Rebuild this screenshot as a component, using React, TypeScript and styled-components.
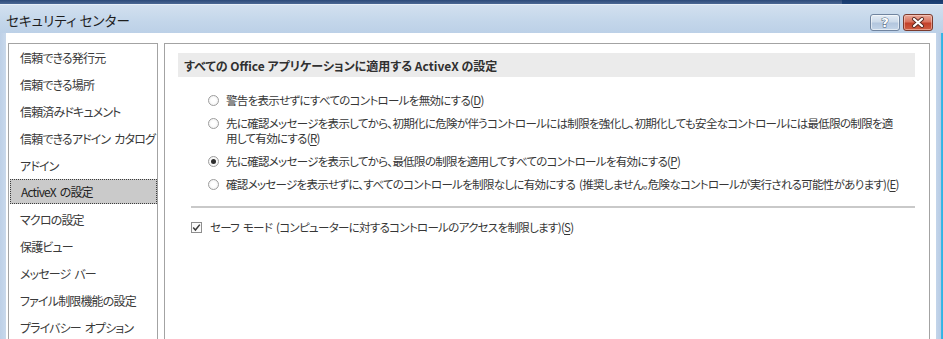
import React from "react";
import styled, { createGlobalStyle, css } from "styled-components";

const FONT = `"Noto Sans CJK JP", "Noto Sans", "Liberation Sans", sans-serif`;

const GlobalStyle = createGlobalStyle`
  html, body { margin: 0; padding: 0; background: #ffffff; overflow: hidden; }
  body { font-family: ${FONT}; }
`;

const Window = styled.div`
  width: 943px;
  height: 339px;
  display: flex;
  flex-direction: column;
  overflow: hidden;
  font-family: ${FONT};
  font-feature-settings: "palt";
  color: #363636;
`;

const TopStrip = styled.div`
  height: 4px;
  display: flex;
  flex-shrink: 0;
`;

const StripPart = styled.div<{ $dark?: boolean }>`
  height: 100%;
  ${(p) =>
    p.$dark
      ? css`
          width: 101px;
          background: linear-gradient(#17396c, #1f4479);
        `
      : css`
          flex: 1;
          background: linear-gradient(#2c4a78, #4b6894);
        `}
`;

const TitleBar = styled.div`
  height: 28px;
  flex-shrink: 0;
  display: flex;
  align-items: flex-start;
  border-top: 1px solid #e6eef7;
  background: linear-gradient(#d2e0ef, #c3d6ea 60%, #bcd0e7);
  padding: 0 10px 0 6px;
`;

const Title = styled.div`
  flex: 1;
  font-size: 13.5px;
  line-height: 16px;
  margin-top: 7px;
  color: #1e1e1e;
  letter-spacing: 0.1px;
`;

const CaptionButtons = styled.div`
  display: flex;
  gap: 3px;
  margin-top: 9px;
`;

const CaptionButton = styled.div<{ $close?: boolean }>`
  width: 30px;
  height: 17px;
  box-sizing: border-box;
  border-radius: 3px;
  display: flex;
  align-items: center;
  justify-content: center;
  ${(p) =>
    p.$close
      ? css`
          border: 1px solid #7b3b2e;
          background: linear-gradient(#e9a999, #d9735f 45%, #c3402a 55%, #cf5e43);
          box-shadow: inset 0 0 0 1px rgba(255, 220, 210, 0.5);
        `
      : css`
          border: 1px solid #70849f;
          background: linear-gradient(#e4ecf5, #ccdaea 45%, #b3c6de 55%, #c3d4e8);
          box-shadow: inset 0 0 0 1px rgba(255, 255, 255, 0.55);
        `}
`;

const HelpGlyph = styled.span`
  font-family: "DejaVu Sans", sans-serif;
  font-weight: bold;
  font-size: 13px;
  line-height: 13px;
  color: #ffffff;
  -webkit-text-stroke: 1px #4a5c78;
  paint-order: stroke fill;
`;

const Body = styled.div`
  flex: 1;
  display: flex;
  min-height: 0;
`;

const SideFrame = styled.div<{ $right?: boolean }>`
  flex-shrink: 0;
  ${(p) =>
    p.$right
      ? css`
          width: 7px;
          background: linear-gradient(90deg, #c4d5ea, #b7cbe4 70%, #3bb8e6 72%, #2fb2e3);
        `
      : css`
          width: 6px;
          background: linear-gradient(90deg, #bdd0e7, #c9d9ec);
        `}
`;

const Content = styled.div`
  flex: 1;
  display: flex;
  gap: 6px;
  padding: 10px 6px 0 2px;
  background: #ffffff;
  min-width: 0;
`;

const NavList = styled.ul`
  width: 150px;
  flex-shrink: 0;
  box-sizing: border-box;
  margin: 0;
  padding: 0;
  list-style: none;
  border: 1px solid #a3a3a3;
  border-bottom: none;
  background: #fff;
`;

const NavItem = styled.li<{ $selected?: boolean }>`
  height: 27px;
  box-sizing: border-box;
  display: flex;
  align-items: center;
  font-size: 12px;
  letter-spacing: -0.85px;
  word-spacing: 2px;
  color: #3a3a3a;
  white-space: nowrap;
  padding-left: 11px;
  ${(p) =>
    p.$selected &&
    css`
      margin: 0 0 2px 1px;
      height: 25px;
      padding-left: 10px;
      background: #cacaca;
      border: 1px dotted #3c3c3c;
      color: #222;
    `}
`;

const Panel = styled.section`
  flex: 1;
  box-sizing: border-box;
  border: 1px solid #a3a3a3;
  border-bottom: none;
  padding: 9px 14px 0 13px;
  min-width: 0;
`;

const SectionHeader = styled.div`
  height: 24px;
  display: flex;
  align-items: center;
  padding-left: 6px;
  background: #ebebeb;
  font-size: 12px;
  font-weight: bold;
  color: #303030;
  white-space: nowrap;
`;

const OptionList = styled.div`
  display: flex;
  flex-direction: column;
  gap: 8px;
  margin-top: 16px;
  padding-left: 30px;
`;

const OptionRow = styled.div`
  display: flex;
  align-items: flex-start;
  gap: 7px;
`;

const Radio = styled.span<{ $checked?: boolean }>`
  width: 11px;
  height: 11px;
  flex-shrink: 0;
  box-sizing: border-box;
  margin-top: 2px;
  border-radius: 50%;
  border: 1px solid #9d9d9d;
  background: radial-gradient(circle, #ffffff 30%, #ececec 100%);
  display: flex;
  align-items: center;
  justify-content: center;
  &::after {
    content: "";
    display: ${(p) => (p.$checked ? "block" : "none")};
    width: 5px;
    height: 5px;
    border-radius: 50%;
    background: #2e2e2e;
  }
`;

const OptionText = styled.span`
  font-size: 11.5px;
  letter-spacing: -0.7px;
  word-spacing: 2px;
  line-height: 15px;
  color: #363636;
  white-space: nowrap;
`;

const Key = styled.span`
  text-decoration: underline;
  text-underline-offset: 2px;
`;

const Separator = styled.hr`
  margin: 14px 0 0 13px;
  border: none;
  height: 2px;
  background: #c9c9c9;
`;

const CheckRow = styled.div`
  display: flex;
  align-items: flex-start;
  gap: 8px;
  margin-top: 12px;
  padding-left: 13px;
`;

const CheckBox = styled.span`
  width: 11px;
  height: 11px;
  flex-shrink: 0;
  box-sizing: border-box;
  margin-top: 2px;
  border: 1px solid #8e8e8e;
  background: #fbfbfb;
  display: flex;
  align-items: center;
  justify-content: center;
`;

const navItems = [
  "信頼できる発行元",
  "信頼できる場所",
  "信頼済みドキュメント",
  "信頼できるアドイン カタログ",
  "アドイン",
  "ActiveX の設定",
  "マクロの設定",
  "保護ビュー",
  "メッセージ バー",
  "ファイル制限機能の設定",
  "プライバシー オプション",
];

export default function App() {
  return (
    <>
      <GlobalStyle />
      <Window>
        <TopStrip>
          <StripPart />
          <StripPart $dark />
        </TopStrip>
        <TitleBar>
          <Title>セキュリティ センター</Title>
          <CaptionButtons>
            <CaptionButton>
              <HelpGlyph>?</HelpGlyph>
            </CaptionButton>
            <CaptionButton $close>
              <svg width="14" height="11" viewBox="0 0 14 11">
                <path d="M3 2 L11 9 M11 2 L3 9" stroke="#5a2a22" strokeWidth="4" strokeLinecap="round" />
                <path d="M3 2 L11 9 M11 2 L3 9" stroke="#ffffff" strokeWidth="2.2" strokeLinecap="round" />
              </svg>
            </CaptionButton>
          </CaptionButtons>
        </TitleBar>
        <Body>
          <SideFrame />
          <Content>
            <NavList>
              {navItems.map((t) => (
                <NavItem key={t} $selected={t === "ActiveX の設定"}>
                  {t}
                </NavItem>
              ))}
            </NavList>
            <Panel>
              <SectionHeader>すべての Office アプリケーションに適用する ActiveX の設定</SectionHeader>
              <OptionList>
                <OptionRow>
                  <Radio />
                  <OptionText>
                    警告を表示せずにすべてのコントロールを無効にする(<Key>D</Key>)
                  </OptionText>
                </OptionRow>
                <OptionRow>
                  <Radio />
                  <OptionText>
                    先に確認メッセージを表示してから、初期化に危険が伴うコントロールには制限を強化し、初期化しても安全なコントロールには最低限の制限を適
                    <br />
                    用して有効にする(<Key>R</Key>)
                  </OptionText>
                </OptionRow>
                <OptionRow>
                  <Radio $checked />
                  <OptionText>
                    先に確認メッセージを表示してから、最低限の制限を適用してすべてのコントロールを有効にする(<Key>P</Key>)
                  </OptionText>
                </OptionRow>
                <OptionRow>
                  <Radio />
                  <OptionText>
                    確認メッセージを表示せずに、すべてのコントロールを制限なしに有効にする (推奨しません。危険なコントロールが実行される可能性があります)(<Key>E</Key>)
                  </OptionText>
                </OptionRow>
              </OptionList>
              <Separator />
              <CheckRow>
                <CheckBox>
                  <svg width="9" height="9" viewBox="0 0 9 9">
                    <path d="M1.2 4.6 L3.4 7 L7.8 1.6" fill="none" stroke="#3a3a3a" strokeWidth="1.5" />
                  </svg>
                </CheckBox>
                <OptionText>
                  セーフ モード (コンピューターに対するコントロールのアクセスを制限します)(<Key>S</Key>)
                </OptionText>
              </CheckRow>
            </Panel>
          </Content>
          <SideFrame $right />
        </Body>
      </Window>
    </>
  );
}
